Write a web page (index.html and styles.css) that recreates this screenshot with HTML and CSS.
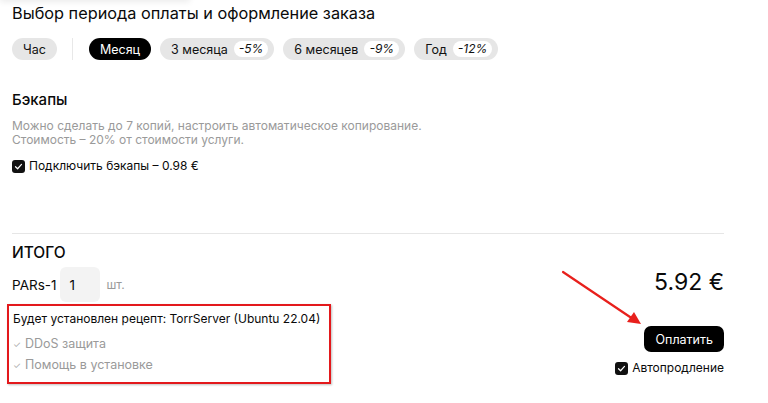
FILE: index.html
```html
<!DOCTYPE html>
<html lang="ru">
<head>
<meta charset="utf-8">
<link rel="stylesheet" href="styles.css">
</head>
<body>
<div class="page">
  <div class="topshadow"></div>
  <h1 class="title">Выбор периода оплаты и оформление заказа</h1>
  <div class="periods">
    <span class="pill">Час</span>
    <span class="sep"></span>
    <span class="pill active">Месяц</span>
    <span class="pill">3 месяца <span class="badge">-5%</span></span>
    <span class="pill">6 месяцев <span class="badge">-9%</span></span>
    <span class="pill">Год <span class="badge">-12%</span></span>
  </div>

  <section class="backup">
    <h2 class="h2">Бэкапы</h2>
    <p class="muted">Можно сделать до 7 копий, настроить автоматическое копирование.<br>Стоимость – 20% от стоимости услуги.</p>
    <label class="check"><span class="box"><svg viewBox="0 0 12 12" width="9" height="9"><path d="M2 6.3 4.8 9 10 3.2" fill="none" stroke="#fff" stroke-width="1.6" stroke-linecap="round" stroke-linejoin="round"/></svg></span>Подключить бэкапы – 0.98 €</label>
  </section>

  <hr class="divider">

  <section class="total">
    <div class="left">
      <h2 class="h3">ИТОГО</h2>
      <div class="qty"><span>PARs-1</span><span class="input">1</span><span class="unit">шт.</span></div>
      <div class="recipe">
        <div class="recipe-title">Будет установлен рецепт: TorrServer (Ubuntu 22.04)</div>
        <div class="feat first"><span class="tick">✓</span>DDoS защита</div>
        <div class="feat"><span class="tick">✓</span>Помощь в установке</div>
      </div>
    </div>
    <div class="right">
      <div class="price">5.92 €</div>
      <button class="pay">Оплатить</button>
      <label class="check auto"><span class="box"><svg viewBox="0 0 12 12" width="9" height="9"><path d="M2 6.3 4.8 9 10 3.2" fill="none" stroke="#fff" stroke-width="1.6" stroke-linecap="round" stroke-linejoin="round"/></svg></span>Автопродление</label>
    </div>
  </section>

  <svg class="arrow" width="90" height="62" viewBox="0 0 90 62">
    <line x1="2" y1="2" x2="72" y2="49" stroke="#e8201c" stroke-width="2.2" stroke-linecap="round"/>
    <path d="M80 54 L66 52 L73 42 Z" fill="#e8201c"/>
  </svg>
</div>
</body>
</html>
```
FILE: styles.css
```css
* { box-sizing: border-box; }
html, body { margin: 0; padding: 0; background: #fff; }
body {
  font-family: Inter, "Noto Sans", "Liberation Sans", sans-serif;
  color: #0a0a0a;
  font-size: 13px;
}
.page {
  position: relative;
  padding: 3px 44px 0 12px;
  width: 768px;
  height: 403px;
  overflow: hidden;
}
.topshadow {
  position: absolute;
  left: 0;
  top: -10px;
  width: 190px;
  height: 10px;
  box-shadow: 0 2px 6px rgba(0,0,0,0.08);
}
.title {
  margin: 0;
  font-size: 16.3px;
  font-weight: 400;
  line-height: 21px;
}
.periods {
  display: flex;
  align-items: center;
  margin-top: 14px;
  gap: 9px;
}
.pill {
  display: inline-flex;
  align-items: center;
  height: 22px;
  padding: 0 11px;
  border-radius: 11px;
  background: #e6e6e6;
  font-size: 12.5px;
  color: #111;
  white-space: nowrap;
}
.pill.active { background: #000; color: #fff; }
.badge {
  margin-left: 6px;
  margin-right: -5px;
  background: #fff;
  border-radius: 8px;
  height: 16px;
  line-height: 16px;
  padding: 0 5px;
  font-style: italic;
  font-size: 12px;
}
.sep {
  width: 1px;
  height: 22px;
  background: #e8e8e8;
  margin: 0 7px 0 6px;
}
.backup { margin-top: 30px; }
.h2 {
  margin: 0;
  font-size: 15px;
  font-weight: 500;
  line-height: 20px;
}
.muted {
  margin: 9px 0 0;
  color: #9a9a9a;
  font-size: 12px;
  line-height: 14px;
}
.check {
  display: flex;
  align-items: center;
  margin-top: 11px;
  font-size: 12px;
  line-height: 16px;
}
.box {
  width: 13px;
  height: 13px;
  border-radius: 3px;
  background: #111;
  display: inline-flex;
  align-items: center;
  justify-content: center;
  margin-right: 4px;
}
.divider {
  border: 0;
  border-top: 1px solid #e6e6e6;
  margin: 59px 0 0;
}
.total {
  display: flex;
  justify-content: space-between;
  margin-top: 9px;
}
.h3 {
  margin: 0;
  font-size: 15.5px;
  font-weight: 500;
  line-height: 20px;
}
.qty {
  display: flex;
  align-items: center;
  margin-top: 4px;
  font-size: 13.5px;
}
.input {
  width: 40px;
  height: 35px;
  margin-left: 4px;
  background: #f3f3f3;
  border-radius: 6px;
  display: inline-flex;
  align-items: center;
  padding-left: 9px;
  font-size: 13.5px;
}
.unit { margin-left: 6px; color: #9a9a9a; font-size: 12px; }
.recipe {
  margin: 2px 0 0 -5px;
  width: 324px;
  height: 80px;
  border: 2px solid #e3191c;
  box-shadow: 1px 1px 2px rgba(0,0,0,0.25);
  padding: 4px 0 0 4px;
}
.recipe-title { font-size: 12px; line-height: 18px; white-space: nowrap; }
.feat {
  color: #9a9a9a;
  font-size: 12.5px;
  line-height: 20px;
}
.feat.first { margin-top: 6px; }
.tick { font-size: 9px; margin-right: 4px; color: #aaa; }
.right {
  display: flex;
  flex-direction: column;
  align-items: flex-end;
  padding-top: 25px;
}
.price {
  font-size: 23px;
  line-height: 28px;
}
.pay {
  margin-top: 30px;
  height: 26px;
  padding: 0 11px;
  background: #000;
  color: #fff;
  border: 0;
  border-radius: 7px;
  font-family: inherit;
  font-size: 12.5px;
}
.check.auto { margin-top: 8px; font-size: 12px; }
.arrow {
  position: absolute;
  left: 561px;
  top: 270px;
}
```
